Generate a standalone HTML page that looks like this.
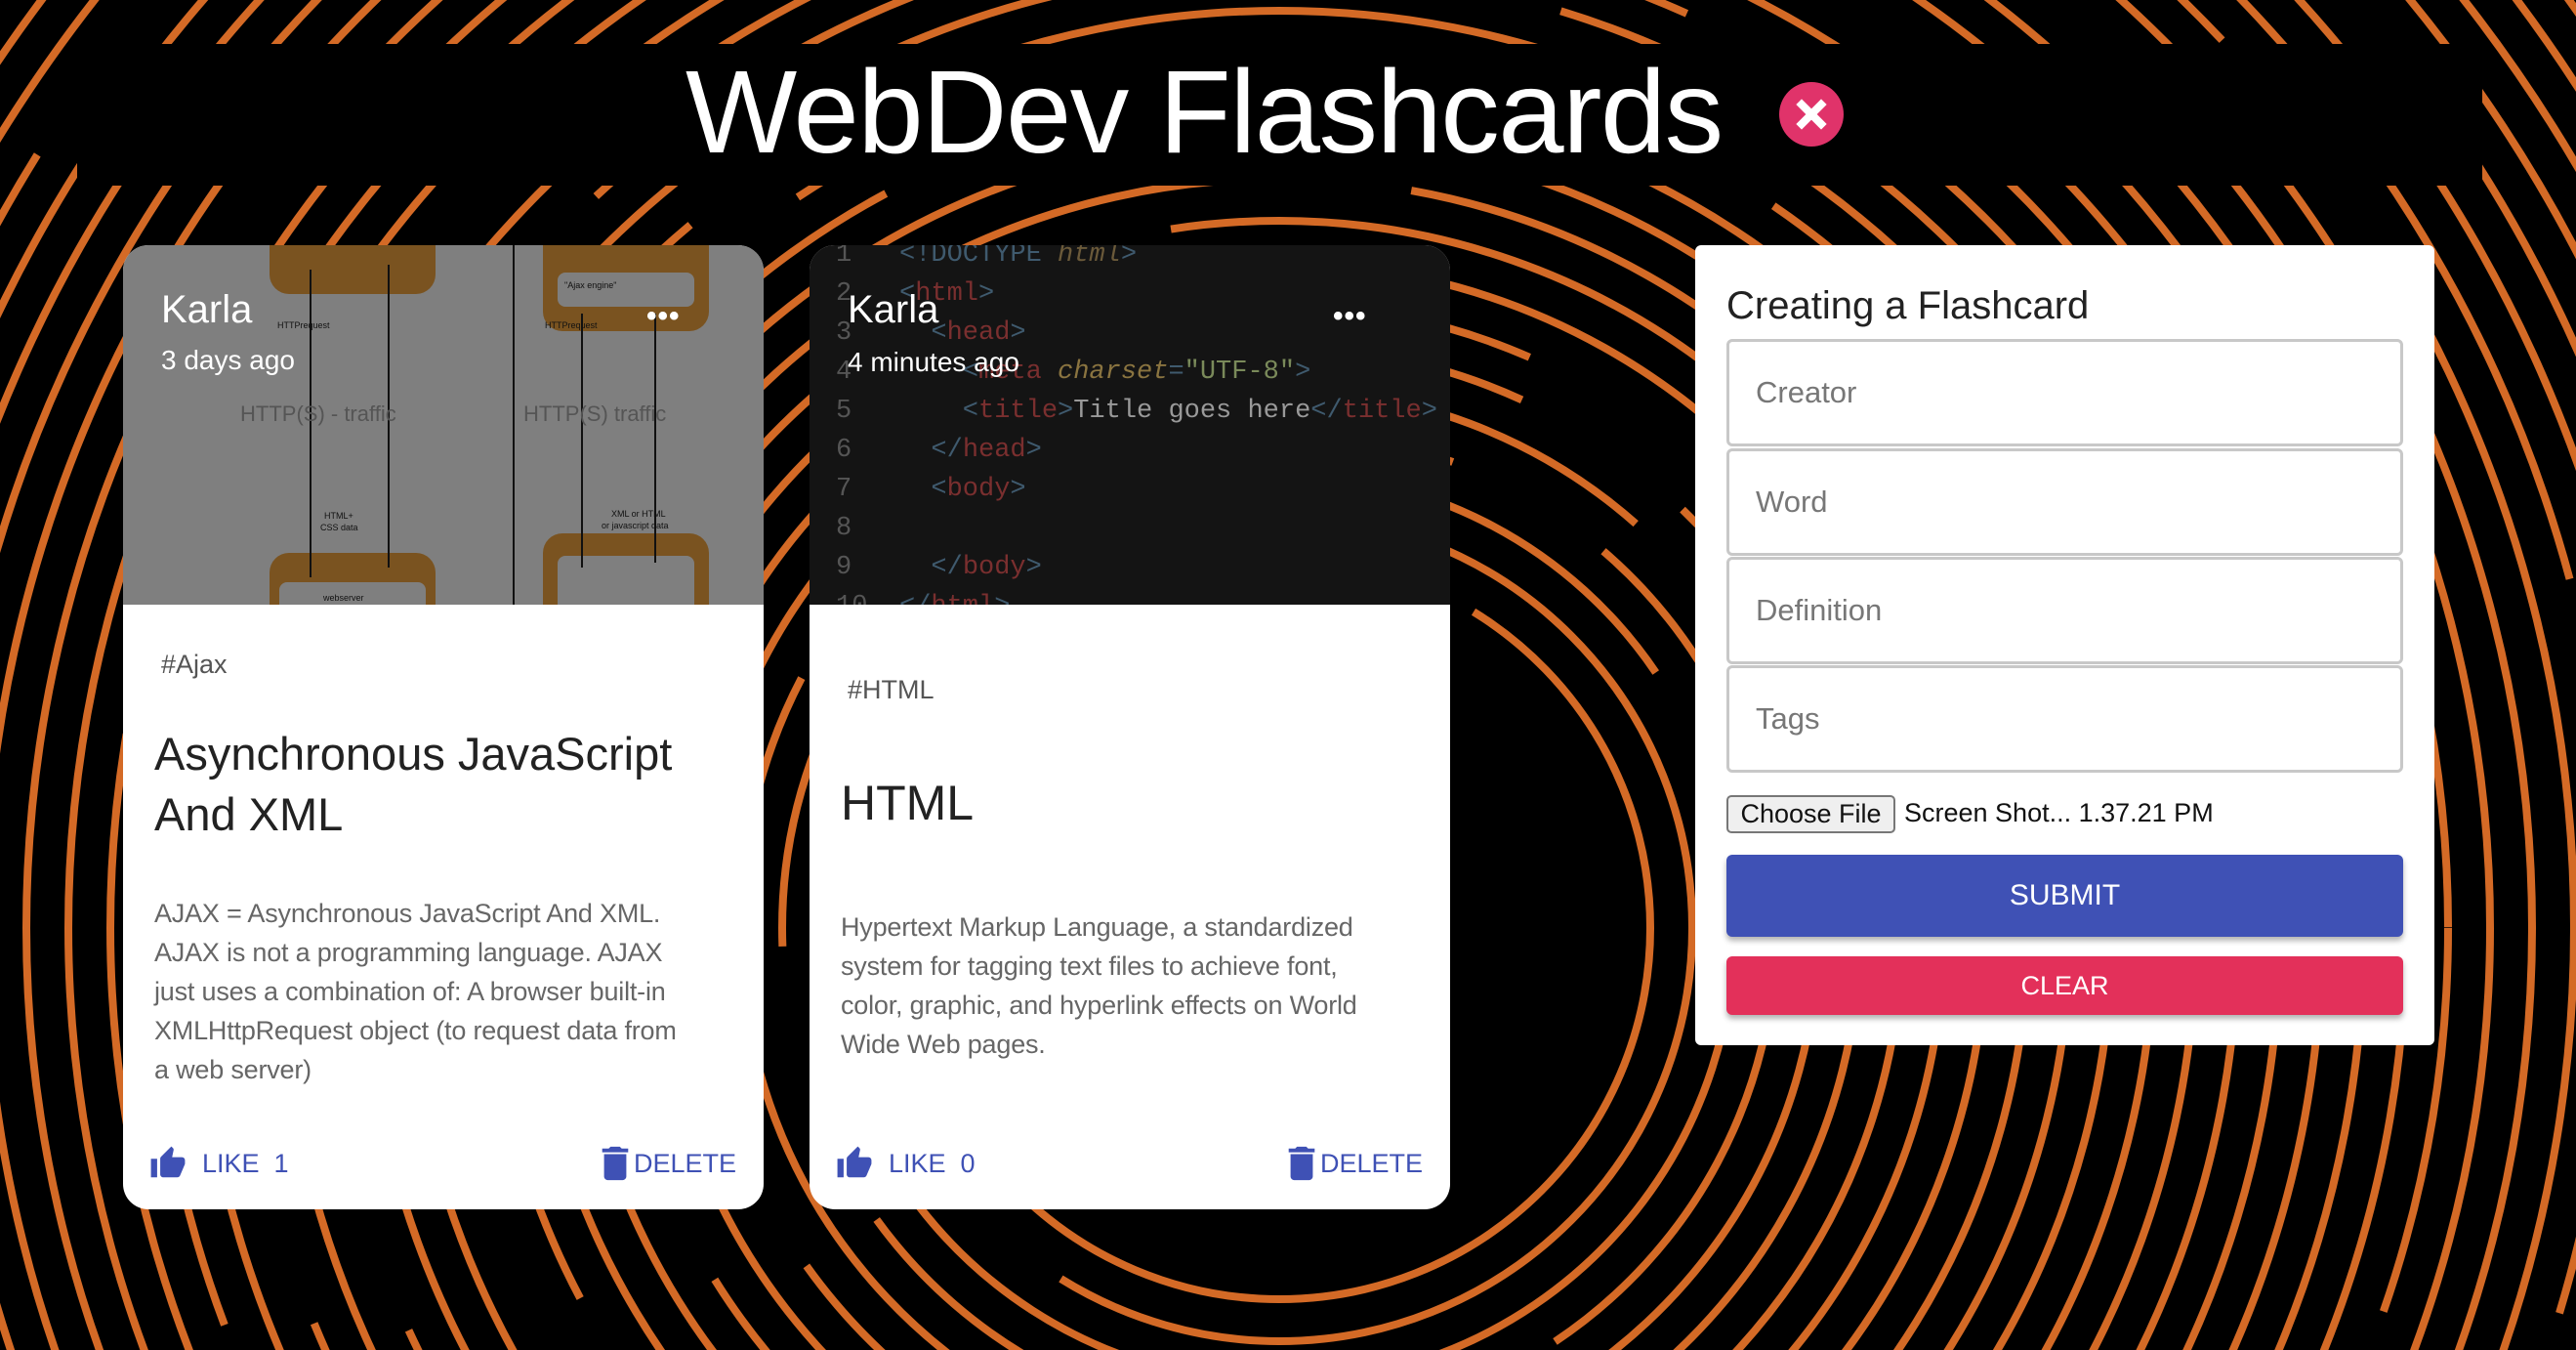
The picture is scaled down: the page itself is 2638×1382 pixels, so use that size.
<!DOCTYPE html>
<html><head><meta charset="utf-8">
<style>
*{box-sizing:border-box;margin:0;padding:0}
html{width:2638px;height:1382px;overflow:hidden}
body{width:2638px;height:1382px;background:#000;position:relative;overflow:hidden;font-family:"Liberation Sans",Arial,sans-serif}
#bg{position:absolute;left:0;top:0}
.band{position:absolute;left:79px;top:45px;width:2463px;height:145px;background:#000}
.title{position:absolute;left:702px;top:44px;font-size:121px;color:#fff;font-weight:normal;letter-spacing:-1.5px;line-height:140px;white-space:nowrap}
.x{position:absolute;left:1822px;top:84px;width:66px;height:66px;border-radius:50%;background:#e0336a}
.card{position:absolute;top:251px;width:656px;height:987px;background:#fff;border-radius:26px;overflow:hidden}
.img{position:absolute;left:0;top:0;width:656px;height:368px;overflow:hidden}
.nm{position:absolute;font-size:40px;color:#fff;left:39px;top:44px}
.ago{position:absolute;font-size:28px;color:#fff;left:39px;top:102px}
.dots{position:absolute;top:56px;font-size:30px;color:#fff;font-weight:bold;letter-spacing:1px}
.tag{position:absolute;font-size:27px;color:#555}
.h{position:absolute;font-size:47px;color:#222;line-height:62px}
.p{position:absolute;font-size:27px;color:#666;line-height:40px;width:570px;letter-spacing:-0.2px}
.act{position:absolute;top:922px;height:36px;font-size:27px;color:#3f51b5;display:flex;align-items:center}
.code{position:absolute;font-family:"Liberation Mono",monospace;font-size:27px;line-height:40px;white-space:pre}
.form{position:absolute;left:1736px;top:251px;width:757px;height:819px;background:#fff;border-radius:6px}
.fh{position:absolute;left:32px;top:40px;font-size:40px;color:#222}
.in{position:absolute;left:32px;width:693px;height:110px;border:3px solid #c8c8c8;border-radius:6px;font-size:31px;color:#777;padding-left:27px;line-height:104px}
.fb{position:absolute;left:32px;top:563px;width:173px;height:39px;border:2px solid #777;border-radius:5px;background:#efefef;font-size:27px;color:#111;text-align:center;line-height:34px}
.fn{position:absolute;left:214px;top:566px;font-size:27px;color:#111}
.btn{position:absolute;left:32px;width:693px;border-radius:6px;color:#fff;text-align:center;box-shadow:0 4px 6px rgba(0,0,0,.3)}
</style></head><body>
<svg id="bg" width="2638" height="1382" viewBox="0 0 2638 1382">
<g fill="none" stroke="#d46a26" stroke-width="8">
<circle cx="1310" cy="950" r="380" stroke-dasharray="900 200 600 300"/>
<circle cx="1310" cy="950" r="423" stroke-dasharray="1200 150 500 250" stroke-dashoffset="300"/>
<circle cx="1310" cy="950" r="466" stroke-dasharray="700 250 900 200" stroke-dashoffset="100"/>
<circle cx="1310" cy="950" r="509" stroke-dasharray="1000 180 600 300" stroke-dashoffset="500"/>
<circle cx="1310" cy="950" r="552" stroke-dasharray="800 300 1100 200" stroke-dashoffset="200"/>
<circle cx="1310" cy="950" r="595" stroke-dasharray="1300 200 700 260" stroke-dashoffset="700"/>
<circle cx="1310" cy="950" r="638" stroke-dasharray="900 220 1000 300" stroke-dashoffset="50"/>
<circle cx="1310" cy="950" r="681" stroke-dasharray="1100 260 800 240" stroke-dashoffset="400"/>
<circle cx="1310" cy="950" r="724" stroke-dasharray="1400 300 600 200" stroke-dashoffset="900"/>
<circle cx="1310" cy="950" r="767" stroke-dasharray="1000 200 1200 300" stroke-dashoffset="150"/>
<circle cx="1310" cy="950" r="810" stroke-dasharray="1500 250 700 300" stroke-dashoffset="600"/>
<circle cx="1310" cy="950" r="853" stroke-dasharray="1200 300 1000 200" stroke-dashoffset="300"/>
<circle cx="1310" cy="950" r="896" stroke-dasharray="1600 220 800 260" stroke-dashoffset="1000"/>
<circle cx="1310" cy="950" r="939" stroke-dasharray="1300 280 1100 240" stroke-dashoffset="450"/>
<circle cx="1310" cy="950" r="982" stroke-dasharray="1700 260 900 300" stroke-dashoffset="200"/>
<circle cx="1310" cy="950" r="1025" stroke-dasharray="1400 300 1200 260" stroke-dashoffset="800"/>
<circle cx="1310" cy="950" r="1068" stroke-dasharray="1800 240 1000 280" stroke-dashoffset="100"/>
<circle cx="1310" cy="950" r="1111" stroke-dasharray="1500 280 1300 240" stroke-dashoffset="650"/>
<circle cx="1310" cy="950" r="1154" stroke-dasharray="1900 300 1100 260" stroke-dashoffset="350"/>
<circle cx="1310" cy="950" r="1197" stroke-dasharray="1600 260 1400 300" stroke-dashoffset="1200"/>
<circle cx="1310" cy="950" r="1240" stroke-dasharray="2000 280 1200 240" stroke-dashoffset="500"/>
<circle cx="1310" cy="950" r="1283" stroke-dasharray="1700 300 1500 260" stroke-dashoffset="900"/>
<circle cx="1310" cy="950" r="1326" stroke-dasharray="2100 240 1300 300" stroke-dashoffset="250"/>
<circle cx="1310" cy="950" r="1369" stroke-dasharray="1800 280 1600 240" stroke-dashoffset="1400"/>
<circle cx="1310" cy="950" r="1412" stroke-dasharray="2200 300 1400 280" stroke-dashoffset="700"/>
<circle cx="1310" cy="950" r="1455" stroke-dasharray="1900 260 1700 300" stroke-dashoffset="150"/>
<circle cx="1310" cy="950" r="1498" stroke-dasharray="2300 280 1500 260" stroke-dashoffset="1100"/>
<circle cx="1310" cy="950" r="1541" stroke-dasharray="2000 300 1800 240" stroke-dashoffset="400"/>
<circle cx="1310" cy="950" r="1584" stroke-dasharray="2400 260 1600 300" stroke-dashoffset="800"/>
<circle cx="1310" cy="950" r="1627" stroke-dasharray="2100 280 1900 260" stroke-dashoffset="1500"/>
<circle cx="1310" cy="950" r="1670" stroke-dasharray="2500 300 1700 280" stroke-dashoffset="300"/>
<circle cx="1310" cy="950" r="1713" stroke-dasharray="2200 260 2000 300" stroke-dashoffset="1000"/>
<circle cx="1310" cy="950" r="1756" stroke-dasharray="2600 280 1800 260" stroke-dashoffset="600"/>
<circle cx="1310" cy="950" r="1799" stroke-dasharray="2300 300 2100 280" stroke-dashoffset="1300"/>
<circle cx="1310" cy="950" r="1842" stroke-dasharray="2700 260 1900 300" stroke-dashoffset="200"/>
<circle cx="1310" cy="950" r="1885" stroke-dasharray="2400 280 2200 260" stroke-dashoffset="900"/>
<circle cx="1310" cy="950" r="1928" stroke-dasharray="2800 300 2000 280" stroke-dashoffset="1600"/>
<circle cx="1310" cy="950" r="1971" stroke-dasharray="2500 260 2300 300" stroke-dashoffset="500"/>
<circle cx="1310" cy="950" r="2014" stroke-dasharray="2900 280 2100 260" stroke-dashoffset="1100"/>
<circle cx="1310" cy="950" r="2057" stroke-dasharray="2600 300 2400 280" stroke-dashoffset="300"/>
<circle cx="1310" cy="950" r="2100" stroke-dasharray="3000 260 2200 300" stroke-dashoffset="1400"/>
<circle cx="1310" cy="950" r="2143" stroke-dasharray="2700 280 2500 260" stroke-dashoffset="700"/>
<circle cx="1310" cy="950" r="2186" stroke-dasharray="3100 300 2300 280" stroke-dashoffset="100"/>
<circle cx="1310" cy="950" r="2229" stroke-dasharray="2800 260 2600 300" stroke-dashoffset="1200"/>
</g>
</svg>
<div class="band"></div>
<div class="title">WebDev Flashcards</div>
<div class="x"><svg width="66" height="66" viewBox="0 0 66 66"><path d="M23 23L43 43M43 23L23 43" stroke="#fff" stroke-width="8" stroke-linecap="square"/></svg></div>

<div class="card" style="left:126px">
  <div class="img" style="background:#7f7f7f">
    <svg width="656" height="368" viewBox="0 0 656 368">
      <g fill="#7a5320"><rect x="150" y="-30" width="170" height="80" rx="20"/><rect x="430" y="-30" width="170" height="118" rx="20"/><rect x="150" y="315" width="170" height="80" rx="20"/><rect x="430" y="295" width="170" height="100" rx="20"/></g>
      <g fill="#7f7f7f"><rect x="160" y="-20" width="150" height="20" rx="8"/><rect x="445" y="28" width="140" height="35" rx="8"/><rect x="160" y="345" width="150" height="40" rx="8"/><rect x="445" y="318" width="140" height="60" rx="8"/></g>
      <g stroke="#111" stroke-width="2"><line x1="192" y1="25" x2="192" y2="340"/><line x1="272" y1="20" x2="272" y2="330"/><line x1="400" y1="0" x2="400" y2="368"/><line x1="470" y1="70" x2="470" y2="330"/><line x1="545" y1="70" x2="545" y2="325"/></g>
      <g fill="#555" font-family="Liberation Sans" font-size="22"><text x="120" y="180">HTTP(S) - traffic</text><text x="410" y="180">HTTP(S) traffic</text></g>
      <g fill="#111" font-size="9" font-family="Liberation Sans"><text x="158" y="85">HTTPrequest</text><text x="432" y="85">HTTPrequest</text><text x="452" y="44">"Ajax engine"</text><text x="206" y="280">HTML+</text><text x="202" y="292">CSS data</text><text x="500" y="278">XML or HTML</text><text x="490" y="290">or javascript data</text><text x="205" y="364">webserver</text></g>
    </svg>
    <div class="nm">Karla</div><div class="ago">3 days ago</div><div class="dots" style="left:536px">•••</div>
  </div>
  <div class="tag" style="left:39px;top:414px">#Ajax</div>
  <div class="h" style="left:32px;top:490px">Asynchronous JavaScript<br>And XML</div>
  <div class="p" style="left:32px;top:664px">AJAX = Asynchronous JavaScript And XML.<br>AJAX is not a programming language. AJAX<br>just uses a combination of: A browser built-in<br>XMLHttpRequest object (to request data from<br>a web server)</div>
  <div class="act" style="left:27px"><svg width="38" height="38" viewBox="0 0 24 24"><path fill="#3f51b5" d="M1 21h4V9H1v12zm22-11c0-1.1-.9-2-2-2h-6.31l.95-4.57.03-.32c0-.41-.17-.79-.44-1.06L14.170 1 7.59 7.59C7.22 7.95 7 8.45 7 9v10c0 1.1.9 2 2 2h9c.83 0 1.54-.5 1.84-1.22l3.02-7.05c.09-.23.14-.47.14-.73v-2z"/></svg><span style="margin-left:16px">LIKE&nbsp;&nbsp;1</span></div>
  <div class="act" style="right:28px"><svg width="34" height="38" viewBox="4 2 16 20"><path fill="#3f51b5" d="M6 19c0 1.1.9 2 2 2h8c1.1 0 2-.9 2-2V7H6v12zM19 4h-3.5l-1-1h-5l-1 1H5v2h14V4z"/></svg><span style="margin-left:2px">DELETE</span></div>
</div>

<div class="card" style="left:829px">
  <div class="img" style="background:#141414">
    <div class="code" style="left:27px;top:-10px;color:#555">1
2
3
4
5
6
7
8
9
10</div>
    <div class="code" style="left:92px;top:-10px;color:#3f5a6e"><span>&lt;!DOCTYPE <i style="color:#6b5a3a">html</i>&gt;</span>
&lt;<span style="color:#7a2f2f">html</span>&gt;
  &lt;<span style="color:#7a2f2f">head</span>&gt;
    &lt;<span style="color:#7a2f2f">meta</span> <i style="color:#8a7440">charset</i>=<span style="color:#7a8a5a">"UTF-8"</span>&gt;
    &lt;<span style="color:#7a2f2f">title</span>&gt;<span style="color:#999">Title goes here</span>&lt;/<span style="color:#7a2f2f">title</span>&gt;
  &lt;/<span style="color:#7a2f2f">head</span>&gt;
  &lt;<span style="color:#7a2f2f">body</span>&gt;

  &lt;/<span style="color:#7a2f2f">body</span>&gt;
&lt;/<span style="color:#7a2f2f">html</span>&gt;</div>
    <div class="nm">Karla</div><div class="ago" style="left:39px;top:104px">4 minutes ago</div><div class="dots" style="left:536px">•••</div>
  </div>
  <div class="tag" style="left:39px;top:440px">#HTML</div>
  <div class="h" style="left:32px;top:540px;font-size:50px">HTML</div>
  <div class="p" style="left:32px;top:678px">Hypertext Markup Language, a standardized<br>system for tagging text files to achieve font,<br>color, graphic, and hyperlink effects on World<br>Wide Web pages.</div>
  <div class="act" style="left:27px"><svg width="38" height="38" viewBox="0 0 24 24"><path fill="#3f51b5" d="M1 21h4V9H1v12zm22-11c0-1.1-.9-2-2-2h-6.31l.95-4.57.03-.32c0-.41-.17-.79-.44-1.06L14.17 1 7.59 7.59C7.22 7.95 7 8.45 7 9v10c0 1.1.9 2 2 2h9c.83 0 1.54-.5 1.84-1.22l3.02-7.05c.09-.23.14-.47.14-.73v-2z"/></svg><span style="margin-left:16px">LIKE&nbsp;&nbsp;0</span></div>
  <div class="act" style="right:28px"><svg width="34" height="38" viewBox="4 2 16 20"><path fill="#3f51b5" d="M6 19c0 1.1.9 2 2 2h8c1.1 0 2-.9 2-2V7H6v12zM19 4h-3.5l-1-1h-5l-1 1H5v2h14V4z"/></svg><span style="margin-left:2px">DELETE</span></div>
</div>

<div class="form">
  <div class="fh">Creating a Flashcard</div>
  <div class="in" style="top:96px">Creator</div>
  <div class="in" style="top:208px">Word</div>
  <div class="in" style="top:319px">Definition</div>
  <div class="in" style="top:430px">Tags</div>
  <div class="fb">Choose File</div>
  <div class="fn">Screen Shot... 1.37.21 PM</div>
  <div class="btn" style="top:624px;height:84px;background:#3f51b5;font-size:30px;line-height:84px">SUBMIT</div>
  <div class="btn" style="top:728px;height:60px;background:#e3305a;font-size:27px;line-height:60px">CLEAR</div>
</div>
</body></html>
